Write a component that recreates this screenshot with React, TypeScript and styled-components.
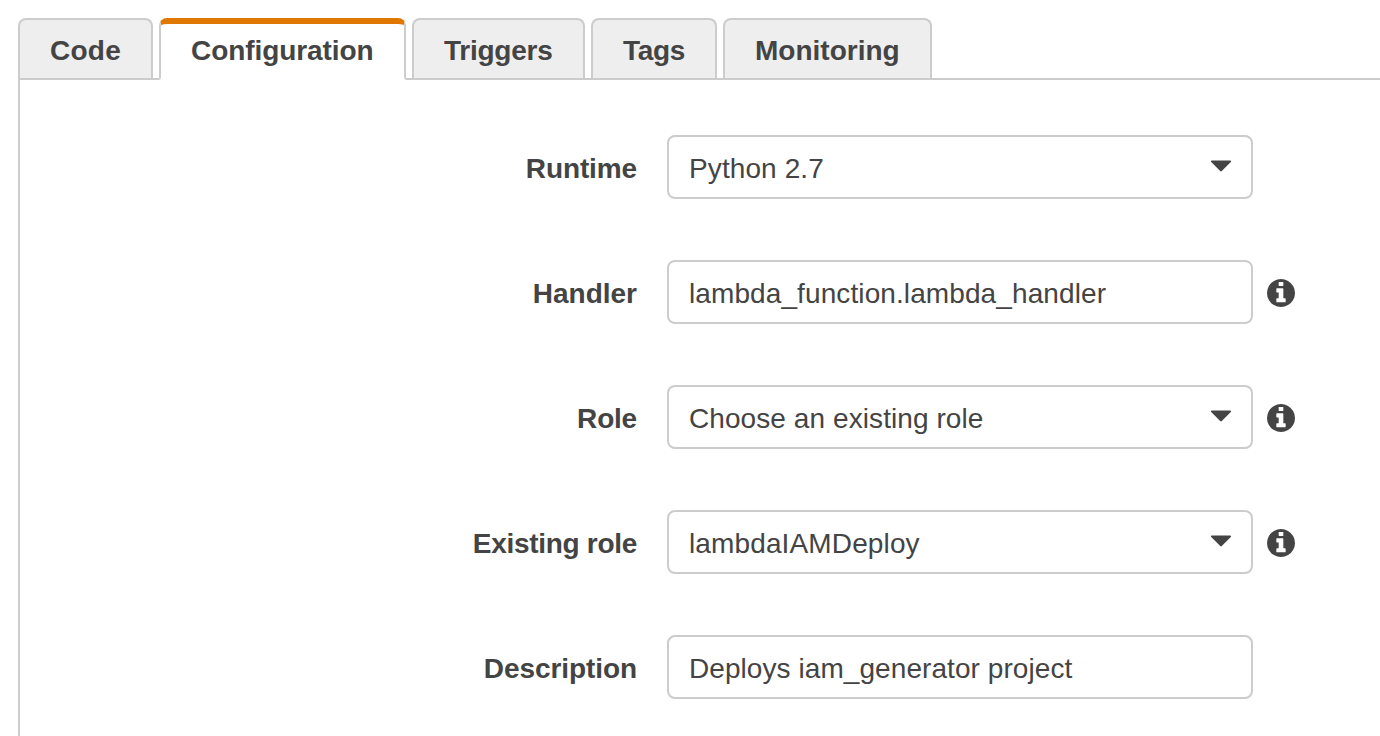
import React from "react";
import styled, { createGlobalStyle, css } from "styled-components";

const GlobalStyle = createGlobalStyle`
  * { box-sizing: border-box; }
  body {
    margin: 0;
    background: #fff;
    color: #444;
    font-family: "Liberation Sans", Helvetica, Arial, sans-serif;
    font-size: 28px;
    line-height: 32px;
    overflow: hidden;
  }
`;

const Page = styled.main`
  height: 736px;
  padding: 18px 0 0 18px;
  display: flex;
  flex-direction: column;
`;

const TabBar = styled.nav`
  display: flex;
  gap: 6px;
  height: 60px;
`;

const Tab = styled.a<{ $active?: boolean; $width: number; $spacing: number }>`
  width: ${(p) => p.$width}px;
  height: 60px;
  padding: 15px 0 0 30px;
  border: 2px solid #ccc;
  border-bottom: 0;
  border-radius: 8px 8px 0 0;
  background: #eee;
  font-weight: 700;
  letter-spacing: ${(p) => p.$spacing}px;
  white-space: nowrap;
  ${(p) =>
    p.$active &&
    css`
      height: 62px;
      padding-top: 11px;
      border-top: 6px solid #e07700;
      border-bottom: 2px solid #fff;
      border-radius: 8px 8px 2px 2px;
      background: #fff;
      z-index: 1;
    `}
`;

const Panel = styled.section`
  flex: 1;
  padding-top: 55px;
  border-top: 2px solid #ccc;
  border-left: 2px solid #ccc;
  display: flex;
  flex-direction: column;
  gap: 61px;
`;

const Row = styled.div`
  display: grid;
  grid-template-columns: 617px 586px 28px;
  column-gap: 30px;
  align-items: center;
  height: 64px;
  flex-shrink: 0;
`;

const Label = styled.label<{ $spacing: number }>`
  text-align: right;
  font-weight: 700;
  letter-spacing: ${(p) => p.$spacing}px;
  padding-top: 4px;
`;

const Field = styled.div`
  height: 64px;
  padding: 0 20px;
  display: flex;
  align-items: center;
  justify-content: space-between;
  border: 2px solid #ccc;
  border-radius: 8px;
`;

const Value = styled.span<{ $spacing: number }>`
  padding-top: 4px;
  letter-spacing: ${(p) => p.$spacing}px;
  white-space: nowrap;
`;

const Caret = styled.svg`
  display: block;
  width: 22px;
  height: 12px;
  margin-bottom: 2px;
  margin-right: -1px;
  fill: #444;
`;

const Info = styled.svg`
  display: block;
  width: 28px;
  height: 28px;
  margin: 2px 0 0 -16px;
  fill: #444;
`;

const tabs = [
  { name: "Code", width: 135, spacing: 0.25 },
  { name: "Configuration", width: 247, spacing: -0.08, active: true },
  { name: "Triggers", width: 173, spacing: -0.25 },
  { name: "Tags", width: 126, spacing: -0.35 },
  { name: "Monitoring", width: 209, spacing: 0 },
];

const rows = [
  { label: "Runtime", value: "Python 2.7", select: true, info: false, ls: -0.12, vs: 0.1 },
  { label: "Handler", value: "lambda_function.lambda_handler", select: false, info: true, ls: 0, vs: 0.1 },
  { label: "Role", value: "Choose an existing role", select: true, info: true, ls: -0.2, vs: 0.08 },
  { label: "Existing role", value: "lambdaIAMDeploy", select: true, info: true, ls: -0.3, vs: 0.13 },
  { label: "Description", value: "Deploys iam_generator project", select: false, info: false, ls: -0.08, vs: 0.07 },
];

const InfoIcon = () => (
  <Info viewBox="128 128 1536 1536">
    <path d="M1152 1376v-160q0-14-9-23t-23-9h-96v-512q0-14-9-23t-23-9h-320q-14 0-23 9t-9 23v160q0 14 9 23t23 9h96v320h-96q-14 0-23 9t-9 23v160q0 14 9 23t23 9h448q14 0 23-9t9-23zM1024 480v-160q0-14-9-23t-23-9h-192q-14 0-23 9t-9 23v160q0 14 9 23t23 9h192q14 0 23-9t9-23zM1664 896q0 209-103 385.500t-279.500 279.500-385.500 103-385.500-103-279.500-279.500-103-385.500 103-385.500 279.500-279.500 385.500-103 385.500 103 279.500 279.500 103 385.500z" />
  </Info>
);

export default function App() {
  return (
    <Page>
      <GlobalStyle />
      <TabBar>
        {tabs.map((t) => (
          <Tab key={t.name} $active={t.active} $width={t.width} $spacing={t.spacing}>
            {t.name}
          </Tab>
        ))}
      </TabBar>
      <Panel>
        {rows.map((r) => (
          <Row key={r.label}>
            <Label $spacing={r.ls}>{r.label}</Label>
            <Field>
              <Value $spacing={r.vs}>{r.value}</Value>
              {r.select && (
                <Caret viewBox="0 0 22 12">
                  <path d="M1.5 0.5h19q1.2 0.6 0.3 1.6l-9 9q-0.8 0.8-1.6 0l-9-9q-0.9-1 0.3-1.6z" />
                </Caret>
              )}
            </Field>
            {r.info && <InfoIcon />}
          </Row>
        ))}
      </Panel>
    </Page>
  );
}
